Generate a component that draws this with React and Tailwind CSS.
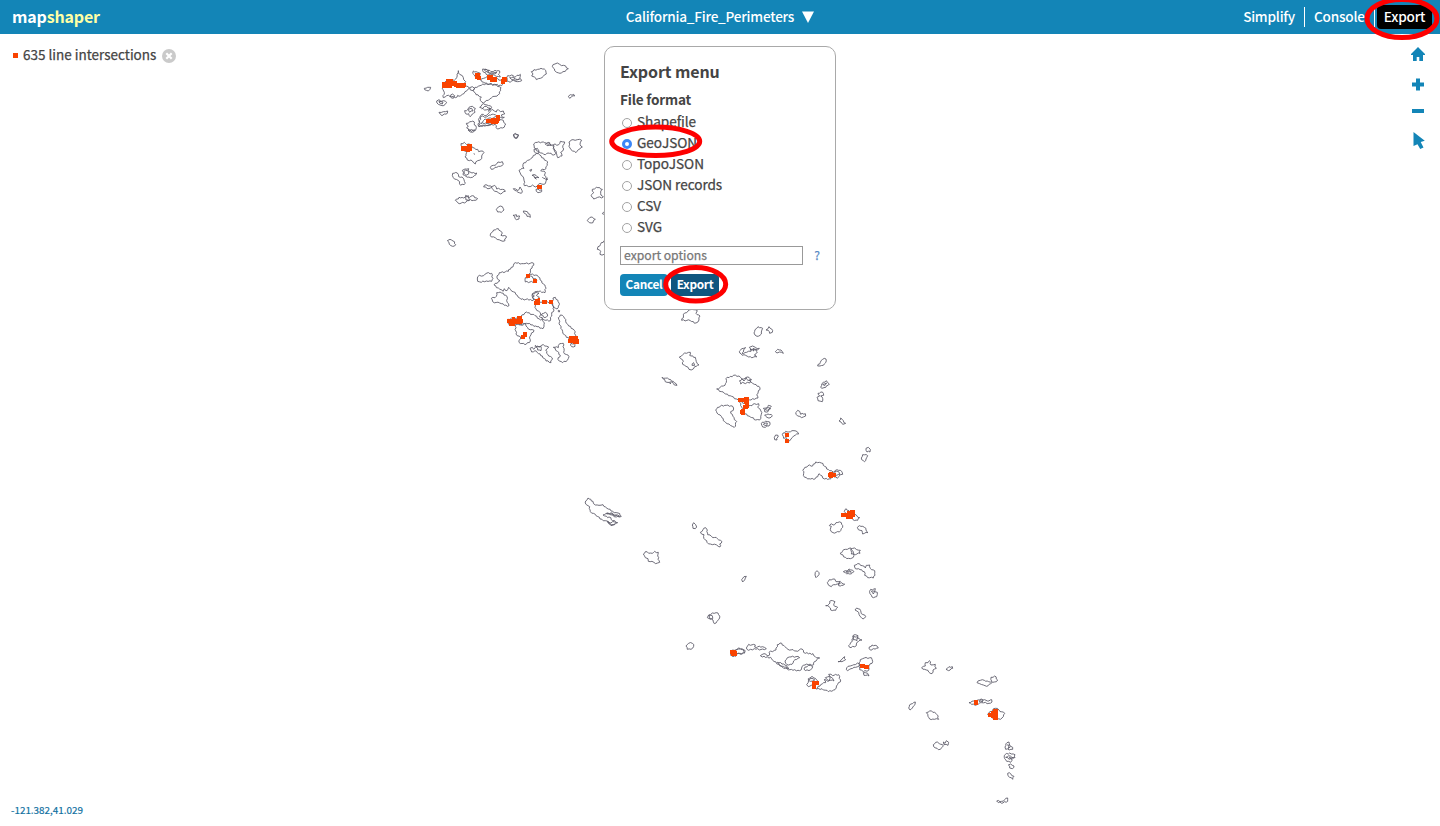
import React from "react";

// Each tile holds outlines at three times map scale, offset by its origin.
const tiles = [
  { x: 415, y: 55, shapes: [
    "28,100 38,97 47,97 45,103 40,108 34,106 29,104",
    "84,90 95,78 118,76 125,68 130,47 134,58 142,62 146,74 152,80 150,90 163,100 150,110 142,118 137,122 128,121 122,128 110,124 95,122 85,128 88,112 84,104",
    "105,122 112,117 119,122 115,130 108,128", "164,98 172,95 179,100 174,107 166,105",
    "175,48 188,52 196,55 192,66 196,73 184,70 178,60 173,55",
    "203,42 215,44 228,50 240,46 254,48 250,58 256,66 244,64 232,58 218,60 206,52",
    "208,44 222,46 218,52 234,54 246,52 240,57 226,57",
    "175,107 180,97 195,92 213,86 238,88 258,98 254,116 240,124 224,132 205,144 196,136 199,126 183,119",
    "192,73 206,82 224,88 242,90 260,92 262,78 242,70 222,66 206,70",
    "278,62 290,60 298,67 316,58 314,70 320,77 308,80 296,76 286,82 276,78", "284,68 294,66 302,72 314,72 302,76 290,74",
    "349,50 357,44 368,43 378,40 392,46 394,57 385,64 376,70 364,74 358,66 350,63 354,57",
    "412,34 420,27 427,24 434,28 446,31 460,41 451,49 444,50 435,55 425,52 419,47",
    "460,124 466,119 476,118 479,123 470,125 464,130",
    "65,138 72,134 78,139 86,137 95,142 90,149 78,151 70,148", "72,138 84,141 82,147 74,144",
    "72,172 85,170 98,168 97,175 88,177 81,182",
    "149,167 158,164 162,157 173,154 181,160 180,172 172,177 165,185 161,176 152,176", "160,164 170,160 174,168 164,172",
    "205,146 216,150 230,157 223,166 205,162 194,157",
    "190,212 194,188 200,178 215,181 224,172 228,166 222,160 230,162 238,168 244,171 250,164 257,170 265,168 270,176 259,180 262,187 268,187 251,190 265,196 272,207 263,219 247,222 240,208 219,212",
    "198,184 214,186 222,180 236,178 246,184 236,188 220,190 206,196 198,206 212,204 230,208 206,212 192,216",
    "154,205 164,200 178,201 178,210 184,217 179,228 166,231 155,219 160,213",
    "294,240 301,235 310,239 308,247 301,250",
    "138,266 148,262 155,269 165,268 173,278 188,283 191,290 198,288 207,293 200,303 196,315 188,317 181,327 172,318 163,317 150,306 155,293 144,282"
  ], lines: ["176,296 180,298", "200,162 214,154 226,160 220,170"] },
  { x: 440, y: 130, shapes: [
    "84,0 94,4 106,0", "221,17 227,12 236,17 231,25 223,23",
    "151,112 160,106 169,103 174,96 187,95 190,103 181,109 165,112 154,118",
    "67,121 75,117 86,116 84,123 96,129 110,129 103,137 91,143 78,139 69,134", "72,124 82,122 86,132 78,136",
    "38,130 52,129 56,140 66,141 72,149 76,160 62,166 54,151 40,143",
    "131,171 138,164 146,168 155,171 147,176", "154,170 164,166 170,177 187,178 196,184 182,192 171,185 159,179",
    "220,176 227,177 234,182 240,171 246,181 244,190 234,187",
    "46,211 57,202 71,204 77,196 84,202 97,197 113,206 101,211 86,211 73,219 55,220",
    "77,202 85,197 87,213 78,210", "169,238 175,231 187,230 192,240 184,247 173,246",
    "219,256 229,254 230,260 239,258 237,267 229,269", "250,243 258,244 270,253 271,262 261,259",
    "152,310 161,300 175,296 182,303 187,309 183,316 199,319 195,332 183,332 167,324 154,321",
    "22,332 30,328 39,333 47,344 38,349 28,343",
    "289,70 278,82 263,91 249,103 252,115 237,121 242,132 251,144 254,157 253,167 266,170 278,165 286,171 300,160 312,163 323,148 313,136 316,127 302,122 318,116 323,96 305,83 295,70",
    "283,54 281,42 292,37 310,36 323,43 339,45 342,56 349,69 341,75 324,69 311,73 298,67",
    "340,44 355,45 361,34 374,36 369,46 371,57 362,67 366,78 353,83 350,72 344,65",
    "316,42 329,38 334,46 321,47", "282,58 292,55 297,63 292,71 283,66",
    "387,36 399,29 412,29 425,31 420,43 427,51 415,59 408,68 393,59 387,49",
    "288,178 305,179 305,185 294,188 289,184", "269,121 275,118 273,124", "276,136 288,136 297,143 285,143 289,147",
    "457,178 469,172 487,178 482,190 490,201 473,202 461,207 453,196 461,187",
    "442,272 449,263 458,262 466,268 459,278 448,278"
  ], lines: ["492,332 474,350 472,358 482,364 480,373 492,373", "492,245 487,251 492,253", "307,141 319,150 322,143"] },
  { x: 465, y: 250, shapes: [
    "87,105 105,92 96,84 103,68 130,64 151,38 175,41 206,40 193,72 217,76 230,93 241,110 240,128 216,124 201,137 206,150 168,148 157,136 137,119 131,112 126,122 118,116 114,124 100,114",
    "37,87 43,76 56,77 66,69 80,70 84,85 80,94 64,93 49,97 38,94",
    "79,145 94,139 95,128 110,129 126,139 125,151 132,167 118,166 104,159 83,155",
    "181,83 197,78 216,91 209,97 181,96", "201,132 213,125 222,129 214,136 223,142 210,151 201,143 208,138",
    "212,151 228,157 262,157 267,180 260,193 256,212 238,210 223,200 226,188 215,181 211,168",
    "264,144 271,142 279,151 283,164 276,177 266,172 263,160", "228,195 236,190 241,187 248,198 240,203",
    "280,203 286,195 296,200 302,214 311,228 328,241 333,260 323,272 304,262 293,245 284,225",
    "128,208 140,204 161,207 184,186 210,197 226,210 232,206 237,224 234,236 212,228 184,220 171,226 149,219 134,228",
    "151,224 182,222 190,237 207,241 195,259 196,273 180,284 162,277 167,261 153,252",
    "195,295 202,292 206,298 211,286 222,290 235,284 251,291 242,300 251,318 262,324 258,338 243,333 232,318 217,308 210,302 200,306",
    "213,291 228,289 228,302 218,300", "265,292 280,293 284,281 295,280 297,295 296,307 312,320 307,331 293,338 279,329 286,316 277,304",
    "318,280 330,280 330,289 320,290", "280,181 284,182 283,186 280,185"
  ]},
  { x: 570, y: 305, shapes: [
    "344,24 358,15 371,14 382,17 378,25 390,33 387,45 378,54 361,47 335,46",
    "328,156 338,149 344,144 361,142 359,151 376,157 379,170 387,180 374,185 370,192 357,193 348,184 338,178 340,169",
    "276,217 297,223 310,229 321,241 313,240 307,231 299,231 302,237 291,232", "367,176 371,173 374,181 366,181"
  ]},
  { x: 700, y: 315, shapes: [
    "165,44 174,35 188,40 184,51 180,61 171,64 162,54", "198,45 207,35 215,42 217,52 209,55 205,46",
    "118,109 125,101 137,98 131,105 126,115 140,112 153,109 148,97 158,93 166,97 178,100 167,106 172,111 163,120 170,126 146,126 137,121 127,121",
    "150,103 162,100 160,108 170,104", "226,110 233,103 243,105 250,115 239,111 231,114",
    "353,153 361,142 368,133 378,132 377,143 370,151 360,153", "362,217 370,202 379,197 388,207 380,212 372,218 366,220",
    "368,208 380,204 374,212", "354,235 367,231 371,241 362,243 368,250 367,260 354,257 351,247 359,243",
    "50,222 70,213 79,202 78,191 100,181 117,183 126,192 147,187 153,201 163,208 177,214 180,224 170,239 174,249 153,255 134,252 114,254 95,244 73,235",
    "118,198 126,192 132,198 138,188 144,196 154,192 150,204 142,202 136,206 128,202 122,207",
    "47,285 61,273 79,271 97,273 100,286 92,290 97,298 103,314 110,320 103,337 91,331 77,323 64,304 51,294",
    "116,258 125,276 131,294 151,306 167,315 179,315 184,298 181,283 173,276 176,266 163,266 156,272 142,269",
    "190,280 200,279 205,271 214,274 207,284 204,290 194,290", "196,284 206,278 212,281 202,286", "194,300 204,297 217,302 213,307 201,307",
    "184,326 196,319 209,321 207,333 196,337 188,336", "190,328 202,324 200,332",
    "287,293 293,286 299,289 302,298 316,296 317,303 305,308 293,303",
    "417,318 422,309 430,317 437,325 429,328 423,321",
    "223,367 227,360 234,361 231,375 224,374", "247,359 257,349 266,351 276,347 288,348 296,357 281,363 273,372 264,378 259,368 251,370",
    "498,400 505,397 511,403 510,411 501,411", "484,429 488,419 503,422 498,432 493,440",
    "308,466 324,452 338,453 347,441 364,444 374,454 389,467 399,471 391,482 392,492 374,492 361,480 357,476 346,491 332,492 314,487 311,475",
    "395,472 411,464 425,469 428,478 417,484 412,490 402,486", "404,470 416,470 420,478 410,482"
  ]},
  { x: 575, y: 485, shapes: [
    "32,48 39,39 54,49 61,60 72,61 84,59 96,70 113,79 129,84 139,94 124,96 113,90 100,86 84,90 98,98 102,96 113,107 128,113 115,120 108,122 96,108 75,102 61,88 46,80 44,65 34,59",
    "94,86 112,84 116,92 128,90 134,94", "96,110 108,114 118,110 122,114 110,119",
    "205,207 211,200 232,205 239,199 250,202 248,213 254,232 242,236 231,229 220,229 219,221 211,218",
    "352,120 356,113 362,119 365,126 361,131 354,130",
    "376,142 392,128 397,135 398,149 410,155 427,161 441,170 434,177 435,186 425,180 412,179 396,172 387,161 387,149",
    "500,284 507,275 514,274 509,285 503,291",
    "397,398 401,390 412,384 429,384 434,399 426,409 418,416 414,405 405,402", "402,391 411,391 413,401 405,402",
    "333,483 341,475 352,475 356,484 348,493 337,493", "469,505 482,505 482,514 473,514",
    "482,495 495,490 511,499 502,507 486,507"
  ]},
  { x: 780, y: 490, shapes: [
    "193,65 198,56 207,62 214,71 231,78 239,83 233,91 219,89 214,80 200,76",
    "150,104 164,104 168,98 184,98 188,112 178,126 159,128 151,119 154,109 148,107",
    "232,112 238,107 253,112 258,120 264,128 248,132 246,122 235,119",
    "180,190 196,178 213,174 220,186 220,202 211,206 196,202", "213,177 224,174 230,179 241,181 240,190 226,194 214,192",
    "190,245 202,243 207,237 222,245 209,252 196,248", "198,246 210,242 214,247", "106,247 111,242 117,248 115,257 108,263 105,255",
    "142,278 148,269 164,267 168,275 181,274 177,283 161,284 154,290 146,286", "176,279 194,282 190,286 176,287",
    "223,226 233,221 247,227 256,234 259,226 269,225 271,235 284,242 284,251 280,264 263,263 254,256 253,245 240,239 226,236",
    "272,298 286,296 284,305 292,307 290,320 276,321 270,311", "274,304 284,304 280,312",
    "137,347 146,343 149,334 158,332 165,335 161,345 173,352 167,361 152,360 147,350",
    "225,360 230,354 242,362 244,371 257,380 249,387 240,379 236,367"
  ]},
  { x: 720, y: 625, shapes: [
    "33,79 44,76 56,72 70,74 75,84 59,85 46,88 42,94 32,91",
    "79,69 86,58 106,60 104,66 127,65 139,71 133,74 103,71 86,76",
    "121,92 132,86 147,92 147,82 168,75 172,59 180,54 195,65 204,73 228,78 246,72 256,85 279,86 286,95 299,99 283,110 281,119 265,119 250,121 239,137 219,136 201,131 187,126 176,118 158,106 152,97 127,96",
    "195,108 208,96 228,95 239,98 225,104 216,118 201,119", "172,112 191,117 207,130 190,124 178,120",
    "252,132 265,121 278,124 272,134 256,137", "260,179 265,172 265,161 278,155 289,163 294,174 284,181 265,185",
    "266,166 276,160 284,164 276,170 286,172",
    "289,192 302,179 317,173 312,164 324,170 330,160 326,148 338,152 356,149 362,165 353,178 345,194 325,200 306,191",
    "316,158 328,154 338,160 342,168 332,166 322,164", "354,110 366,103 374,95 377,104 366,110",
    "386,62 397,49 398,34 406,29 414,32 412,40 426,45 411,52 409,62 393,68",
    "401,33 414,37 411,47 399,44", "447,71 456,60 470,62 475,69 460,71 453,76",
    "379,134 384,124 397,121 406,119 413,114 419,121 407,127 393,131 383,137",
    "417,114 421,104 433,99 454,98 458,110 448,121 446,136 430,140 419,134", "430,143 443,145 447,153 432,151"
  ]},
  { x: 895, y: 650, shapes: [
    "80,53 91,48 91,38 99,38 103,32 108,45 121,43 120,50 124,55 114,60 111,71 101,66 94,60",
    "153,58 162,50 172,50 173,55 161,62", "246,98 256,91 268,91 281,95 291,95 288,82 299,78 308,90 298,96 287,101 275,109 265,105 254,101",
    "222,158 236,153 249,150 269,149 277,153 290,149 291,156 282,160 260,158 246,164 230,163", "252,154 264,150 262,156",
    "41,174 48,162 61,156 60,164 52,174 45,180", "94,188 104,183 119,187 126,194 131,208 118,208 104,207 99,199",
    "115,284 127,276 133,281 145,288 140,293 130,299 116,290", "145,276 150,280 154,272 161,277 159,286 147,284",
    "278,192 301,175 312,180 329,190 321,204 306,209 292,203",
    "336,278 342,276 344,286 353,292 353,298 332,298 330,291", "338,284 346,290 340,296",
    "328,323 331,313 344,309 360,314 360,323 343,322 351,331 347,337 335,334 329,326", "332,322 346,318 356,324 342,328", "340,345 347,342 357,348 352,356 344,354",
    "338,370 347,371 357,379 353,388 344,382", "305,453 320,454 338,444 338,454 324,459 310,458"
  ]}
];

// Line intersection markers, drawn as blocks: x, y, width, height in map pixels.
const marks = [
  [442,82,10,6],[446,79,7,6],[451,81,6,5],[454,83,12,4],[456,84,9,4],
  [475,73,5,6],[477,76,4,4],[487,75,6,5],[490,77,7,5],[502,77,5,5],[501,79,4,5],
  [486,119,13,4],[491,118,7,6],[496,115,4,6],[461,146,7,5],[467,144,5,7],[466,146,4,6],[537,185,5,4],
  [526,274,4,4],[533,279,4,4],[535,299,4,6],[538,298,2,5],[534,301,6,4],[542,300,5,4],[549,300,4,4],
  [507,319,10,4],[509,321,6,5],[512,317,3,8],[514,319,8,5],[517,316,5,5],[519,319,4,4],[521,335,4,4],[523,332,4,5],
  [569,336,9,4],[568,339,11,4],[573,339,6,5],
  [738,398,10,4],[744,397,5,7],[745,402,4,6],[743,405,5,4],[740,410,5,4],[741,409,4,6],
  [785,433,4,4],[785,439,4,4],[828,473,8,4],[829,472,4,6],
  [841,513,10,4],[847,511,8,6],[850,510,5,5],[846,514,7,5],
  [730,650,6,4],[731,651,6,5],[812,681,7,4],[812,683,4,6],[860,664,5,4],[864,665,5,4],
  [974,700,4,5],[988,713,10,4],[991,711,4,7],[993,709,5,11]
];

function trace(points, closed) {
  const p = points.split(" ").map((s) => s.split(",").map(Number));
  const out = [];
  const n = closed ? p.length : p.length - 1;
  for (let i = 0; i < n; i++) {
    const a = p[i];
    const b = p[(i + 1) % p.length];
    out.push(a);
    const dx = b[0] - a[0];
    const dy = b[1] - a[1];
    const len = Math.hypot(dx, dy);
    const parts = Math.floor(len / 4.5);
    for (let k = 1; k < parts; k++) {
      const t = k / parts;
      const j = (((a[0] * 7 + a[1] * 13 + k * 29) % 11) - 5) * 0.48;
      out.push([a[0] + dx * t - (dy / len) * j, a[1] + dy * t + (dx / len) * j]);
    }
  }
  if (!closed) out.push(p[p.length - 1]);
  return "M" + out.map((q) => q[0].toFixed(1) + " " + q[1].toFixed(1)).join("L") + (closed ? "Z" : "");
}

function FireMap() {
  return (
    <svg className="absolute left-0 top-0" width="1440" height="792" viewBox="0 34 1440 792">
      {tiles.map((t) => (
        <g key={t.x + "-" + t.y} transform={`translate(${t.x} ${t.y}) scale(0.33333)`} fill="none" stroke="#5f5d6b" strokeWidth="2.7">
          {t.shapes.map((s) => <path key={s} d={trace(s, true)} />)}
          {(t.lines || []).map((s) => <path key={s} d={trace(s, false)} />)}
        </g>
      ))}
      <g fill="#f94300" shapeRendering="crispEdges">
        {marks.map((m, i) => <rect key={i} x={m[0]} y={m[1]} width={m[2]} height={m[3]} />)}
      </g>
    </svg>
  );
}

function Header() {
  return (
    <header className="grid h-[34px] shrink-0 grid-cols-[1fr_auto_1fr] items-center bg-[#1385b7] text-[13.6px] leading-[32px] font-medium tracking-[-0.22px] text-white">
      <div className="pb-[2px] pl-3 text-[16px] font-bold tracking-[-0.15px]">map<span className="text-[#ffffa5]">shaper</span></div>
      <div className="flex items-center gap-[8px]">
        <span className="pb-[2px]">California_Fire_Perimeters</span>
        <svg width="12" height="12" viewBox="0 0 12 12"><path d="M0 0.5H12L6 12Z" fill="white" /></svg>
      </div>
      <nav className="flex items-center justify-end pr-2">
        <span className="pr-[9px] pb-[2px]">Simplify</span>
        <span className="h-5 w-px bg-white" />
        <span className="w-[69px] pb-[2px] pl-[9px]">Console</span>
        <span className="h-5 w-px bg-white" />
        <span className="ml-[2px] h-6 w-[55px] rounded-[4px] bg-black text-center leading-[23px]">Export</span>
      </nav>
    </header>
  );
}

function Option({ label, checked }) {
  return (
    <label className="flex h-[21px] items-center gap-[5px] pl-[2px]">
      <span className={checked
        ? "mt-[2px] h-[10px] w-[10px] rounded-full border-[3px] border-[#3b86f7] bg-white"
        : "mt-[2px] h-[10px] w-[10px] rounded-full border border-[#a3a3a3] bg-white"} />
      <span>{label}</span>
    </label>
  );
}

function ExportMenu() {
  return (
    <section className="absolute left-[604px] top-3 h-[264px] w-[232px] rounded-[10px] border border-[#a9a9a9] bg-white px-[15px] pt-3 text-[13.6px] tracking-[-0.05px] text-[#444] [-webkit-text-stroke:0.25px]">
      <h2 className="text-[16px] leading-6 font-bold tracking-[-0.12px] [-webkit-text-stroke:0]">Export menu</h2>
      <h3 className="mt-[6px] mb-[2px] leading-[20px] font-bold tracking-[-0.2px] [-webkit-text-stroke:0]">File format</h3>
      <Option label="Shapefile" />
      <Option label="GeoJSON" checked />
      <Option label="TopoJSON" />
      <Option label="JSON records" />
      <Option label="CSV" />
      <Option label="SVG" />
      <div className="mt-[9px] flex items-center justify-between">
        <input placeholder="export options" className="h-[19px] w-[183px] border border-[#999] bg-white px-[3px] pb-[2px] text-[12.2px] tracking-normal placeholder:text-[#777]" />
        <span className="pb-[2px] text-[12px] leading-[17px] text-[#5a8cc4]">?</span>
      </div>
      <div className="mt-[9px] flex gap-[3px] text-[11.8px] leading-[20px] font-bold tracking-[-0.3px] text-white [-webkit-text-stroke:0]">
        <button className="h-[22px] w-[48px] rounded-[4px] bg-[#1385b7] pb-[2px] text-center">Cancel</button>
        <button className="h-[22px] w-[48px] rounded-[4px] bg-[#10567f] pb-[2px] text-center">Export</button>
      </div>
    </section>
  );
}

function MapTools() {
  return (
    <svg className="absolute right-[13px] top-[12px]" width="18" height="106" viewBox="0 0 18 106" fill="#1385b7">
      <path d="M9 1L16 8V9H14V15H10.300V11H7.700V15H4V9H2V8Z" />
      <path d="M7 32.500H11V36.500H15V40.500H11V44.500H7V40.500H3V36.500H7Z" />
      <path d="M3 63H15V67H3Z" />
      <path d="M4.500 86L15.800 94.800L11.700 96L14.500 101.500L11.200 103L8.500 98.200L4.500 100Z" />
    </svg>
  );
}

export default function App() {
  return (
    <div className="relative flex h-[826px] w-[1440px] flex-col overflow-hidden bg-white font-['Noto_Sans_CJK_SC',sans-serif]">
      <Header />
      <main className="relative flex flex-1 flex-col justify-between">
        <FireMap />
        <div className="flex items-center pl-[13px] pt-[11px] text-[13.5px] leading-5 text-[#444] [-webkit-text-stroke:0.25px]">
          <span className="mt-[1px] mr-[5px] h-[5px] w-[5px] bg-[#f94300]" />
          <span className="-mt-px mb-px">635 line intersections</span>
          <svg className="ml-[6px] mt-[1px]" width="14" height="14" viewBox="0 0 14 14">
            <circle cx="7" cy="7" r="7" fill="#cacaca" />
            <path d="M4.300 4.300L9.700 9.700M9.700 4.300L4.300 9.700" stroke="white" strokeWidth="2.200" />
          </svg>
        </div>
        <div className="pb-[8px] pl-[11px] text-[9.9px] leading-4 text-[#0f6f9f] [-webkit-text-stroke:0.2px]">-121.382,41.029</div>
        <ExportMenu />
        <MapTools />
      </main>
      <svg className="pointer-events-none absolute left-0 top-0" width="1440" height="826" fill="none" stroke="#fe0000" strokeWidth="5">
        <ellipse cx="1402" cy="18.500" rx="35" ry="19" />
        <ellipse cx="655.700" cy="141.300" rx="44" ry="14.200" />
        <ellipse cx="695.700" cy="284.300" rx="30" ry="16.700" />
      </svg>
    </div>
  );
}
